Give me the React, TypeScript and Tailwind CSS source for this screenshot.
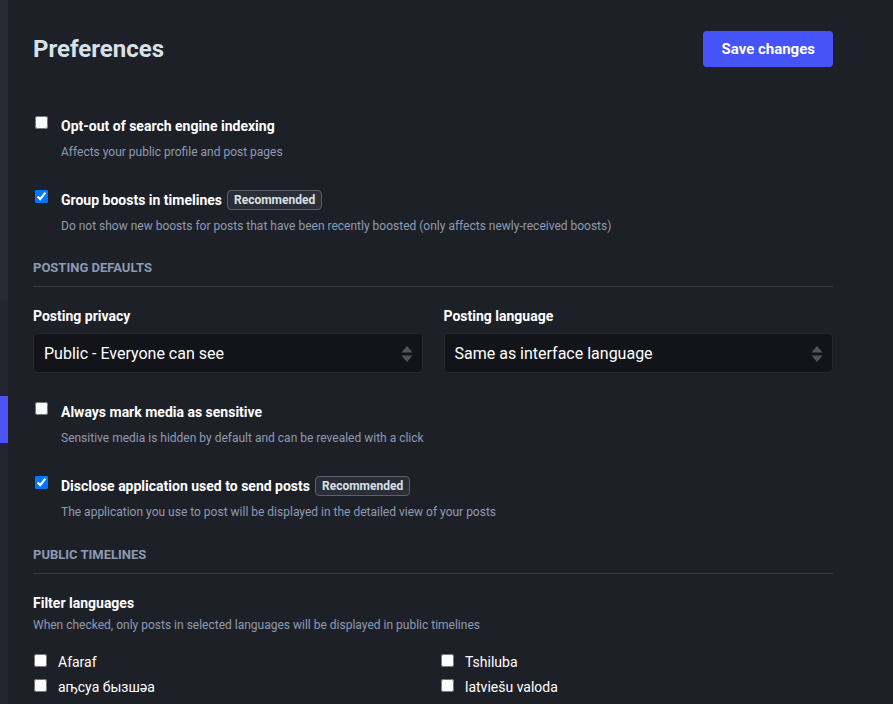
import React from 'react';

const font = { fontFamily: 'Roboto, "Liberation Sans", sans-serif' };

const Badge = () => (
  <span className="ml-[5px] inline-flex h-5 items-center rounded-[4px] border border-[#5b606c] bg-[#2b2e36] px-[6px] text-[12px] font-bold text-[#d9e1e8]">
    Recommended
  </span>
);

const CheckItem = ({
  label,
  hint,
  checked,
  recommended,
  className = '',
}: {
  label: string;
  hint: string;
  checked?: boolean;
  recommended?: boolean;
  className?: string;
}) => (
  <div className={`flex items-start ${className}`}>
    <input
      type="checkbox"
      defaultChecked={checked}
      className="ml-[2px] mt-0 h-[13px] w-[13px] shrink-0 accent-[#0075ff]"
    />
    <div className="ml-[13px]">
      <div className="flex h-5 items-center text-[14px] font-bold text-white">
        {label}
        {recommended && <Badge />}
      </div>
      <div className="mt-2 text-[12px] leading-4 text-[#8e9bb2]">{hint}</div>
    </div>
  </div>
);

const SectionTitle = ({ children, className = '' }: { children: React.ReactNode; className?: string }) => (
  <div className={`border-b border-[#363a46] pb-[10px] text-[13px] font-bold uppercase leading-4 text-[#8b9bb4] ${className}`}>
    {children}
  </div>
);

const Select = ({ label, value }: { label: string; value: string }) => (
  <div>
    <div className="h-5 text-[14px] font-bold leading-5 text-white">{label}</div>
    <div className="mt-[7px] flex h-10 items-center justify-between rounded-[4px] border border-[#24262d] bg-[#131419] pl-[10px] pr-[9px] pt-[2px] text-[16px] text-white">
      <span>{value}</span>
      <svg width="12" height="18" viewBox="0 0 12 18">
        <path d="M6 1 L11.5 7.5 H0.5 Z" fill="#4f5361" />
        <path d="M6 17 L11.5 10.5 H0.5 Z" fill="#4f5361" />
      </svg>
    </div>
  </div>
);

const languages: [string, string][] = [
  ['Afaraf', 'Tshiluba'],
  ['аҧсуа бызшәа', 'latviešu valoda'],
  ['Avesta', 'Malagasy'],
];

export default function App() {
  return (
    <div className="flex min-h-screen bg-[#1e2028]" style={font}>
      <div className="flex w-2 shrink-0 flex-col bg-[#23262e]">
        <div className="h-[300px] bg-[#282b34]" />
        <div className="h-[96px]" />
        <div className="h-[47px] bg-[#4a53f4]" />
      </div>
      <main className="w-[825px] pl-[25px] pb-10">
        <div className="flex h-9 items-center justify-between mt-[31px]">
          <h1 className="text-[24px] font-bold text-[#d9e1e8]">Preferences</h1>
          <button className="h-9 rounded-[4px] bg-[#4653f8] px-[18px] text-[15px] font-bold text-white">
            Save changes
          </button>
        </div>

        <CheckItem
          className="mt-[49px]"
          label="Opt-out of search engine indexing"
          hint="Affects your public profile and post pages"
        />
        <CheckItem
          className="mt-[30px]"
          checked
          recommended
          label="Group boosts in timelines"
          hint="Do not show new boosts for posts that have been recently boosted (only affects newly-received boosts)"
        />

        <SectionTitle className="mt-[26px]">Posting defaults</SectionTitle>

        <div className="mt-[19px] grid grid-cols-2 gap-x-[21px]">
          <Select label="Posting privacy" value="Public - Everyone can see" />
          <Select label="Posting language" value="Same as interface language" />
        </div>

        <CheckItem
          className="mt-[29px]"
          label="Always mark media as sensitive"
          hint="Sensitive media is hidden by default and can be revealed with a click"
        />
        <CheckItem
          className="mt-[30px]"
          checked
          recommended
          label="Disclose application used to send posts"
          hint="The application you use to post will be displayed in the detailed view of your posts"
        />

        <SectionTitle className="mt-[27px]">Public timelines</SectionTitle>

        <div className="mt-[19px] h-5 text-[14px] font-bold leading-5 text-white">Filter languages</div>
        <div className="mt-1 text-[12px] leading-4 text-[#8e9bb2]">
          When checked, only posts in selected languages will be displayed in public timelines
        </div>

        <div className="mt-[17px] grid grid-cols-[407px_1fr]">
          {languages.map(([a, b]) => (
            <React.Fragment key={a}>
              {[a, b].map((l) => (
                <label key={l} className="flex h-[25px] items-start text-[14px] text-white">
                  <input type="checkbox" className="ml-[1px] mt-[4px] h-[13px] w-[13px] shrink-0 accent-[#0075ff]" />
                  <span className="ml-[11px] leading-6">{l}</span>
                </label>
              ))}
            </React.Fragment>
          ))}
        </div>
      </main>
    </div>
  );
}
